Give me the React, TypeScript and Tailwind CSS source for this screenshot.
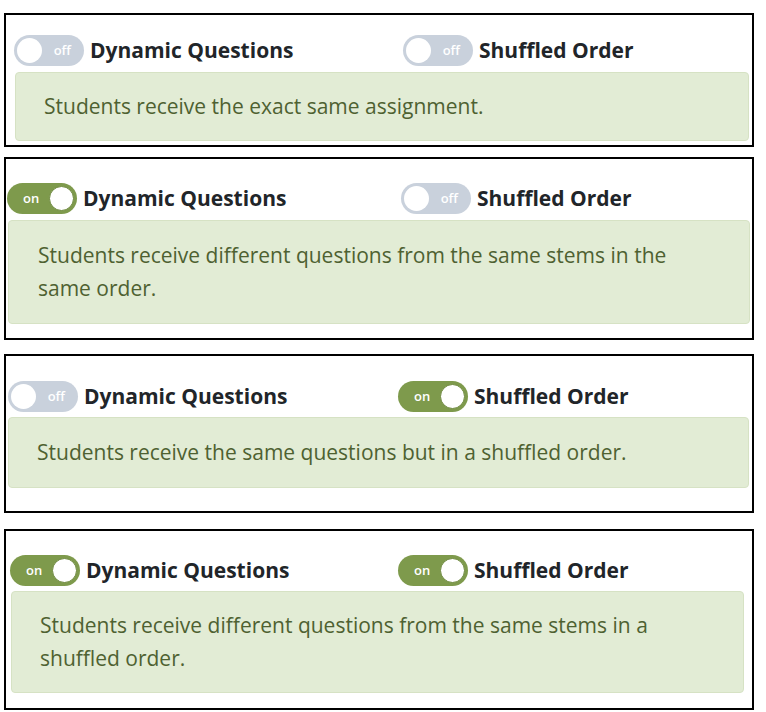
import React from 'react';

type PanelProps = {
  dynamic: boolean;
  shuffled: boolean;
  text: string;
  wrap: string; // panel offsets
  head: string;
  col: string;
  box: string;
};

function Toggle({ on }: { on: boolean }) {
  if (on) {
    return (
      <div className="flex h-[31px] w-[70px] shrink-0 items-center justify-between rounded-full bg-[#7e9a4c] pl-[16px] pr-[3px]">
        <span className="text-[13px] font-semibold leading-none text-white">on</span>
        <span className="h-[25px] w-[25px] rounded-full border border-[#6f8a40] bg-white" />
      </div>
    );
  }
  return (
    <div className="flex h-[31px] w-[70px] shrink-0 items-center rounded-full bg-[#c9d1dc] pl-[3px] pr-[13px]">
      <span className="h-[25px] w-[25px] rounded-full bg-white" />
      <span className="ml-auto text-[13px] font-semibold leading-none text-white">off</span>
    </div>
  );
}

function Panel({ dynamic, shuffled, text, wrap, head, col, box }: PanelProps) {
  return (
    <div className={`flex flex-col border-2 border-black ${wrap}`}>
      <div className={`flex items-center ${head}`}>
        <div className={`flex items-center gap-[6px] ${col}`}>
          <Toggle on={dynamic} />
          <span className="text-[21px] font-bold text-[#212529]">Dynamic Questions</span>
        </div>
        <div className="flex items-center gap-[6px]">
          <Toggle on={shuffled} />
          <span className="text-[21px] font-bold text-[#212529]">Shuffled Order</span>
        </div>
      </div>
      <div className={`rounded-[4px] border border-[#d6e2c4] bg-[#e2ecd5] text-[21px] leading-[33px] text-[#4e6131] ${box}`}>
        <p className="max-w-[650px]">{text}</p>
      </div>
    </div>
  );
}

export default function App() {
  return (
    <div className="min-h-screen bg-white pb-[3px]" style={{ fontFamily: '"Open Sans", Lato, sans-serif' }}>
      <Panel
        dynamic={false}
        shuffled={false}
        text="Students receive the exact same assignment."
        wrap="mt-[13px] ml-[4px] w-[750px] h-[134px]"
        head="pt-[20px] pl-[8px]"
        col="w-[389px]"
        box="mt-[5px] ml-[9px] mr-[3px] px-[28px] py-[17px]"
      />
      <Panel
        dynamic={true}
        shuffled={false}
        text="Students receive different questions from the same stems in the same order."
        wrap="mt-[10px] ml-[4px] w-[750px] h-[183px]"
        head="pt-[24px] pl-[1px]"
        col="w-[394px]"
        box="mt-[5px] ml-[2px] mr-[2px] px-[29px] py-[18px]"
      />
      <Panel
        dynamic={false}
        shuffled={true}
        text="Students receive the same questions but in a shuffled order."
        wrap="mt-[14px] ml-[4px] w-[750px] h-[159px]"
        head="pt-[25px] pl-[2px]"
        col="w-[390px]"
        box="mt-[4px] ml-[2px] mr-[3px] px-[28px] py-[18px]"
      />
      <Panel
        dynamic={true}
        shuffled={true}
        text="Students receive different questions from the same stems in a shuffled order."
        wrap="mt-[16px] ml-[4px] w-[750px] h-[181px]"
        head="pt-[24px] pl-[4px]"
        col="w-[388px]"
        box="mt-[4px] ml-[5px] mr-[8px] px-[28px] py-[17px]"
      />
    </div>
  );
}
